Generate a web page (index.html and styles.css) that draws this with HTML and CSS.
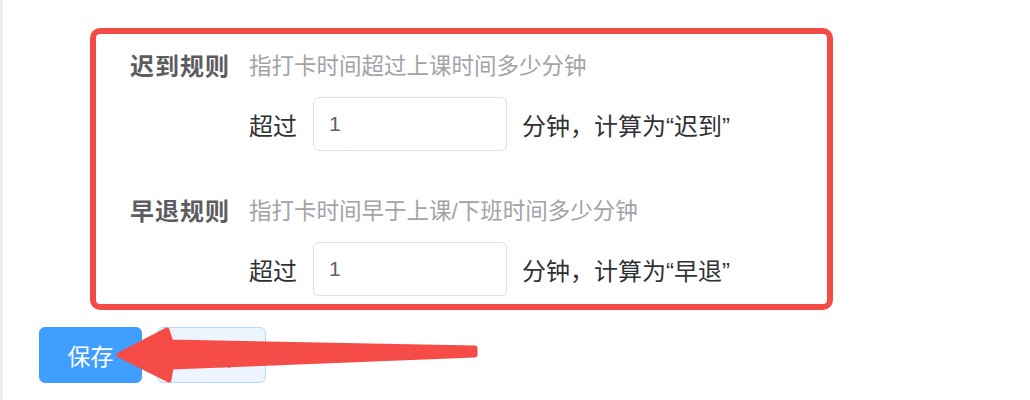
FILE: index.html
```html
<!DOCTYPE html>
<html lang="zh-CN">
<head>
  <meta charset="UTF-8" />
  <meta name="viewport" content="width=device-width, initial-scale=1.0"/>
  <title>考勤规则</title>
  <link rel="stylesheet" href="styles.css">
</head>
<body>

  <div class="page">
    <div class="rules-box">
      <div class="rule">
        <div class="rule-label">迟到规则</div>
        <div class="rule-desc">指打卡时间超过上课时间多少分钟</div>
        <div class="rule-line">
          <span>超过</span>
          <input type="text" class="minutes" value="1" />
          <span>分钟，计算为“迟到”</span>
        </div>
      </div>

      <div class="rule">
        <div class="rule-label">早退规则</div>
        <div class="rule-desc">指打卡时间早于上课/下班时间多少分钟</div>
        <div class="rule-line">
          <span>超过</span>
          <input type="text" class="minutes" value="1" />
          <span>分钟，计算为“早退”</span>
        </div>
      </div>
    </div>

    <div class="actions">
      <button class="btn btn-primary">保存</button>
      <button class="btn btn-plain">取消</button>

      <!-- annotation arrow pointing at the save button -->
      <svg class="arrow" width="380" height="70" viewBox="100 320 380 70">
        <polygon points="116,355 164,330 168,342 472,348 472,355 168,367 166,380" />
      </svg>
    </div>
  </div>

</body>
</html>
```

FILE: styles.css
```css
body {
  margin: 0;
  padding: 0;
  background: #fff;
  font-family: "Liberation Sans", "Noto Sans CJK SC", sans-serif;
  color: #303133;
}

.page {
  position: relative;
  height: 400px;
  overflow: hidden;
  border-left: 3px solid #eceef3;
  padding-top: 28px;
  box-sizing: border-box;
}

.rules-box {
  margin-left: 87px;
  width: 743px;
  height: 282px;
  border: 6px solid #f54b47;
  border-radius: 10px;
  padding: 18px 0 0 34px;
  box-sizing: border-box;
}

.rule {
  display: grid;
  grid-template-columns: 119px 1fr;
  align-items: center;
}

.rule + .rule {
  margin-top: 46px;
}

.rule-label {
  font-size: 24px;
  font-weight: bold;
  letter-spacing: 1px;
  color: #5c5d60;
  line-height: 30px;
}

.rule-desc {
  font-size: 22.5px;
  color: #a1a3a8;
  line-height: 30px;
}

.rule-line {
  grid-column: 2;
  display: flex;
  align-items: center;
  margin-top: 15px;
  font-size: 24px;
  color: #303133;
}

.minutes {
  width: 194px;
  height: 54px;
  box-sizing: border-box;
  margin: 0 15px 0 16px;
  padding: 0 15px;
  border: 1px solid #dcdfe6;
  border-radius: 6px;
  font-family: "Liberation Sans", Arial, sans-serif;
  font-size: 21px;
  color: #606266;
  outline: none;
}

.actions {
  display: flex;
  gap: 15px;
  margin: 17px 0 0 36px;
}

.btn {
  height: 56px;
  border-radius: 6px;
  font-family: inherit;
  font-size: 23px;
  cursor: pointer;
}

.btn-primary {
  width: 103px;
  background: #409eff;
  border: 1px solid #409eff;
  color: #fff;
}

.btn-plain {
  width: 109px;
  background: #ecf5ff;
  border: 1px solid #b3d8ff;
  color: #409eff;
}

.arrow {
  position: absolute;
  left: 100px;
  top: 320px;
}

.arrow polygon {
  fill: #f64c48;
  stroke: #f64c48;
  stroke-width: 5;
  stroke-linejoin: round;
}
```
